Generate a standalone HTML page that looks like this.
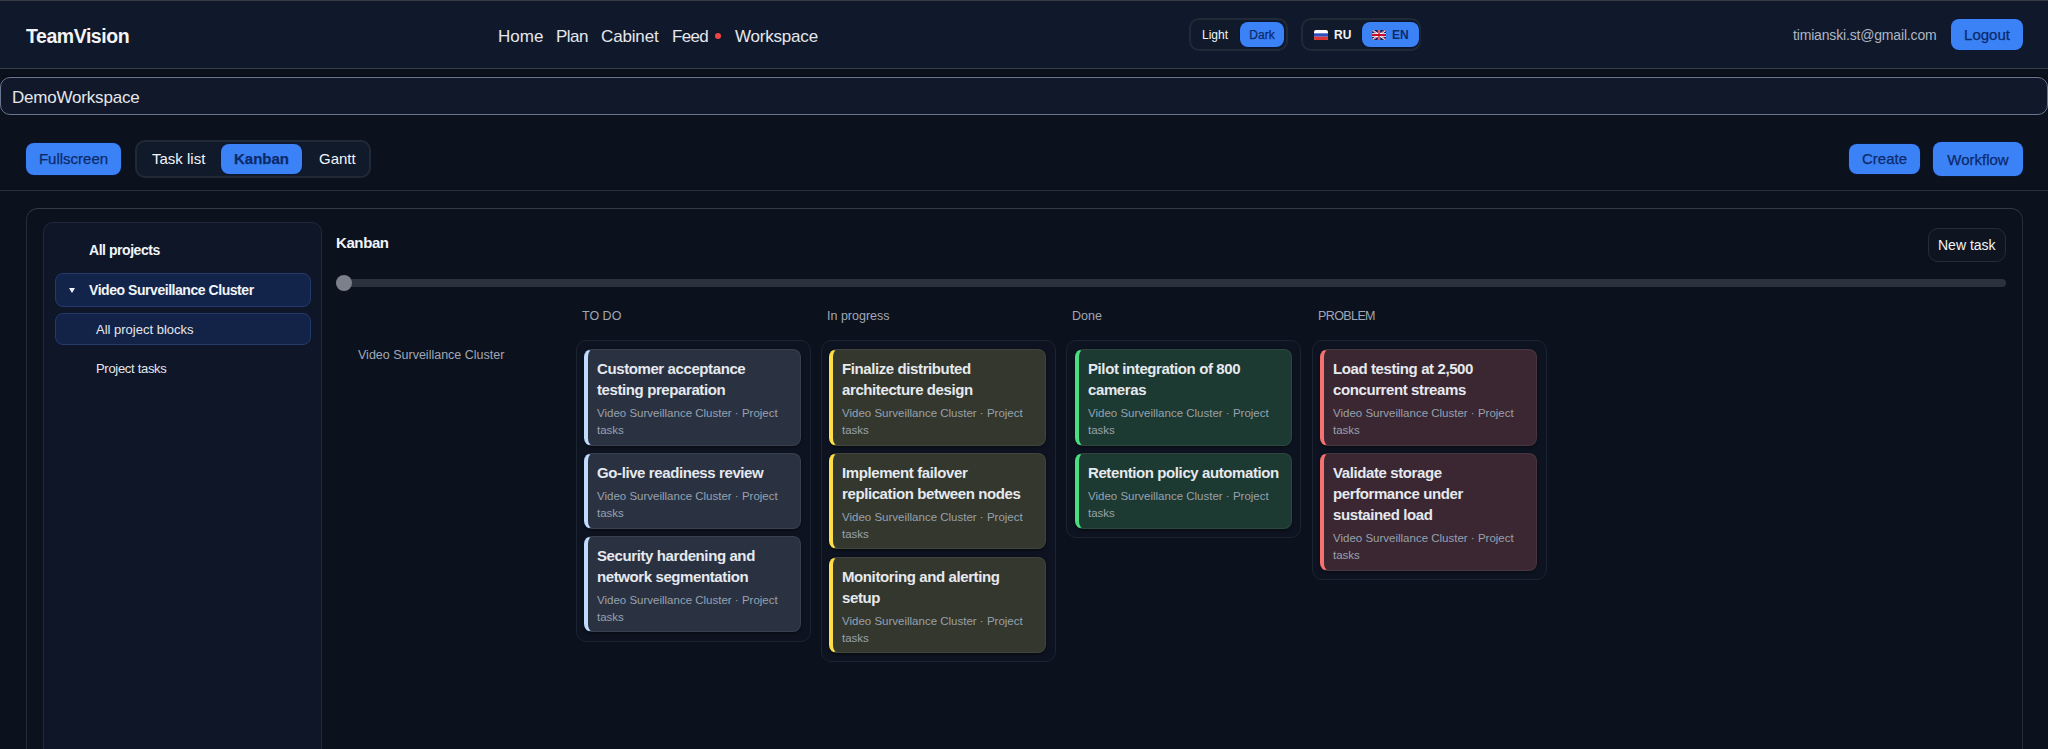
<!DOCTYPE html>
<html><head><meta charset="utf-8">
<style>
*{box-sizing:border-box;margin:0;padding:0}
html,body{width:2048px;height:749px;overflow:hidden;background:#0b111d;font-family:"Liberation Sans",sans-serif;color:#e5e7eb}
.abs{position:absolute;white-space:nowrap}
#topline{left:0;top:0;width:2048px;height:2px;background:linear-gradient(#353c47 0,#353c47 50%,#131822 50%,#131822 100%)}
#header{left:0;top:2px;width:2048px;height:67px;background:#10192b;border-bottom:1px solid #373e4b}
.logo{left:26px;top:25px;font-size:19.5px;letter-spacing:-0.45px;font-weight:bold;color:#f3f4f6}
.nav{top:27px;font-size:17px;color:#e5e7eb}
.dot{left:715px;top:33px;width:6px;height:6px;border-radius:50%;background:#ef4444}
.grp{border:2px solid #212937;border-radius:10px;background:#111a2b}
.seg{font-size:12px}
.blue{background:#3b82f6;color:#0b2a6b}
.btn{border-radius:8px;box-shadow:0 0 0 1px #0a1633;text-align:center;-webkit-text-stroke:0.25px #0b2a6b}
#ws{left:0;top:77px;width:2048px;height:38px;border:1.5px solid #6a7592;border-radius:10px;background:#10182a;box-shadow:0 -1px 2px rgba(0,0,0,.5)}
#ws span{position:absolute;left:11px;top:10px;font-size:17px;letter-spacing:-0.2px;color:#e5e7eb}
#sep{left:0;top:190px;width:2048px;height:1px;background:#272d39}
#main{left:26px;top:208px;width:1997px;height:600px;border:1px solid #262c38;border-top-color:#333946;border-radius:12px;background:#0c111e}
#side{left:43px;top:222px;width:279px;height:600px;border:1px solid #20283a;border-radius:10px;background:#0f1628}
.col{border:1px solid #1c2331;border-radius:10px;background:#0d1320}
.card{position:absolute;left:7px;width:217px;border-radius:8px;border:1px solid rgba(255,255,255,0.07);padding:8px 8px 8px 9px;box-shadow:0 1px 3px rgba(0,0,0,.5)}
.card .t{font-size:15px;font-weight:bold;line-height:21px;color:#e6e9ee;letter-spacing:-0.4px;white-space:nowrap}
.card .s{font-size:11.5px;line-height:16.5px;color:#98a1ae;margin-top:5px;white-space:nowrap}
.todo{background:#2a3242;border-left:4px solid #bfdbfe}
.prog{background:#33372d;border-left:4px solid #fde047}
.done{background:#1c3932;border-left:4px solid #4ade80}
.prob{background:#3a2732;border-left:4px solid #f87171}
.colh{top:309px;font-size:12.5px;color:#a1a8b4}
.sb{font-size:14px;font-weight:bold;letter-spacing:-0.45px;color:#f1f5f9}
</style></head><body>
<div id="topline" class="abs"></div>
<div id="header" class="abs"></div>
<div class="abs logo">TeamVision</div>
<div class="abs nav" style="left:498px">Home</div>
<div class="abs nav" style="left:556px;letter-spacing:-0.5px">Plan</div>
<div class="abs nav" style="left:601px;letter-spacing:-0.15px">Cabinet</div>
<div class="abs nav" style="left:672px;letter-spacing:-0.7px">Feed</div>
<div class="abs dot"></div>
<div class="abs nav" style="left:735px;letter-spacing:-0.2px">Workspace</div>

<div class="abs grp" style="left:1189px;top:18px;width:99px;height:33px"></div>
<div class="abs seg" style="left:1202px;top:28px;color:#f3f4f6">Light</div>
<div class="abs btn blue seg" style="left:1240px;top:22px;width:44px;height:25px;line-height:26px;">Dark</div>

<div class="abs grp" style="left:1301px;top:18px;width:120px;height:33px"></div>
<div class="abs btn blue" style="left:1362px;top:22px;width:57px;height:25px"></div>
<svg class="abs" style="left:1314px;top:30px" width="14" height="10" viewBox="0 0 14 10"><rect x="0" y="0" width="14" height="10" rx="2" fill="#fff"/><rect x="0" y="3.3" width="14" height="3.4" fill="#2f4fbf"/><path d="M0 6.7H14V8a2 2 0 0 1-2 2H2a2 2 0 0 1-2-2z" fill="#d33"/></svg>
<div class="abs seg" style="left:1334px;top:28px;color:#f3f4f6;font-weight:bold">RU</div>
<svg class="abs" style="left:1372px;top:30px" width="14" height="10" viewBox="0 0 60 30" preserveAspectRatio="none"><defs><clipPath id="r"><rect x="0" y="0" width="60" height="30" rx="9" ry="7"/></clipPath><clipPath id="t"><path d="M30,15 h30 v15 z v15 h-30 z h-30 v-15 z v-15 h30 z"/></clipPath></defs><g clip-path="url(#r)"><rect width="60" height="30" fill="#012169"/><path d="M0,0 L60,30 M60,0 L0,30" stroke="#fff" stroke-width="6"/><path d="M0,0 L60,30 M60,0 L0,30" clip-path="url(#t)" stroke="#C8102E" stroke-width="4"/><path d="M30,0 v30 M0,15 h60" stroke="#fff" stroke-width="10"/><path d="M30,0 v30 M0,15 h60" stroke="#C8102E" stroke-width="6"/></g></svg>
<div class="abs seg" style="left:1392px;top:28px;color:#0b2a6b;font-weight:bold">EN</div>

<div class="abs" style="left:1793px;top:27px;font-size:14px;letter-spacing:-0.17px;color:#aeb6c3">timianski.st@gmail.com</div>
<div class="abs btn blue" style="left:1951px;top:19px;width:72px;height:31px;font-size:15px;line-height:31px">Logout</div>

<div id="ws" class="abs"><span>DemoWorkspace</span></div>

<div class="abs btn blue" style="left:26px;top:143px;width:95px;height:32px;font-size:15px;line-height:32px">Fullscreen</div>
<div class="abs grp" style="left:135px;top:140px;width:236px;height:38px"></div>
<div class="abs" style="left:152px;top:150px;font-size:15px;color:#f3f4f6">Task list</div>
<div class="abs btn blue" style="left:221px;top:144px;width:81px;height:30px;font-size:15px;line-height:30px;font-weight:bold">Kanban</div>
<div class="abs" style="left:319px;top:150px;font-size:15px;color:#f3f4f6">Gantt</div>

<div class="abs btn blue" style="left:1849px;top:144px;width:71px;height:30px;font-size:15px;line-height:30px">Create</div>
<div class="abs btn blue" style="left:1933px;top:142px;width:90px;height:34px;font-size:15px;line-height:36px">Workflow</div>
<div id="sep" class="abs"></div>

<div id="main" class="abs"></div>
<div id="side" class="abs"></div>

<div class="abs sb" style="left:89px;top:242px">All projects</div>
<div class="abs" style="left:55px;top:273px;width:256px;height:34px;border:1px solid #223a6c;border-radius:8px;background:#13244a"></div>
<div class="abs" style="left:69px;top:288px;width:0;height:0;border-left:3.5px solid transparent;border-right:3.5px solid transparent;border-top:5px solid #f1f5f9"></div>
<div class="abs sb" style="left:89px;top:282px">Video Surveillance Cluster</div>
<div class="abs" style="left:55px;top:313px;width:256px;height:32px;border:1px solid #223a6c;border-radius:8px;background:#132348"></div>
<div class="abs" style="left:96px;top:322px;font-size:13px;color:#e5e7eb">All project blocks</div>
<div class="abs" style="left:96px;top:361px;font-size:13px;letter-spacing:-0.3px;color:#e5e7eb">Project tasks</div>

<div class="abs" style="left:336px;top:234px;font-size:15px;font-weight:bold;letter-spacing:-0.4px;color:#f1f5f9">Kanban</div>
<div class="abs" style="left:1928px;top:228px;width:78px;height:34px;border:1px solid #252c3a;border-radius:10px;background:#0f1520"></div>
<div class="abs" style="left:1938px;top:237px;font-size:14px;color:#f3f4f6">New task</div>
<div class="abs" style="left:336px;top:279px;width:1670px;height:8px;border-radius:4px;background:#2b313d"></div>
<div class="abs" style="left:336px;top:275px;width:16px;height:16px;border-radius:50%;background:#7b808a"></div>

<div class="abs colh" style="left:582px">TO DO</div>
<div class="abs colh" style="left:827px">In progress</div>
<div class="abs colh" style="left:1072px">Done</div>
<div class="abs colh" style="left:1318px;letter-spacing:-0.6px">PROBLEM</div>
<div class="abs" style="left:358px;top:348px;font-size:12.5px;color:#a1a8b4">Video Surveillance Cluster</div>

<div class="abs col" style="left:576px;top:340px;width:235px;height:302px">
 <div class="card todo" style="top:8px;height:97px"><div class="t">Customer acceptance<br>testing preparation</div><div class="s">Video Surveillance Cluster · Project<br>tasks</div></div>
 <div class="card todo" style="top:112px;height:76px"><div class="t">Go-live readiness review</div><div class="s">Video Surveillance Cluster · Project<br>tasks</div></div>
 <div class="card todo" style="top:195px;height:96px"><div class="t">Security hardening and<br>network segmentation</div><div class="s">Video Surveillance Cluster · Project<br>tasks</div></div>
</div>
<div class="abs col" style="left:821px;top:340px;width:235px;height:322px">
 <div class="card prog" style="top:8px;height:97px"><div class="t">Finalize distributed<br>architecture design</div><div class="s">Video Surveillance Cluster · Project<br>tasks</div></div>
 <div class="card prog" style="top:112px;height:96px"><div class="t">Implement failover<br>replication between nodes</div><div class="s">Video Surveillance Cluster · Project<br>tasks</div></div>
 <div class="card prog" style="top:216px;height:96px"><div class="t">Monitoring and alerting<br>setup</div><div class="s">Video Surveillance Cluster · Project<br>tasks</div></div>
</div>
<div class="abs col" style="left:1066px;top:340px;width:235px;height:198px">
 <div class="card done" style="left:8px;top:8px;height:97px"><div class="t">Pilot integration of 800<br>cameras</div><div class="s">Video Surveillance Cluster · Project<br>tasks</div></div>
 <div class="card done" style="left:8px;top:112px;height:76px"><div class="t">Retention policy automation</div><div class="s">Video Surveillance Cluster · Project<br>tasks</div></div>
</div>
<div class="abs col" style="left:1312px;top:340px;width:235px;height:240px">
 <div class="card prob" style="top:8px;height:97px"><div class="t">Load testing at 2,500<br>concurrent streams</div><div class="s">Video Surveillance Cluster · Project<br>tasks</div></div>
 <div class="card prob" style="top:112px;height:118px"><div class="t">Validate storage<br>performance under<br>sustained load</div><div class="s">Video Surveillance Cluster · Project<br>tasks</div></div>
</div>
</body></html>
